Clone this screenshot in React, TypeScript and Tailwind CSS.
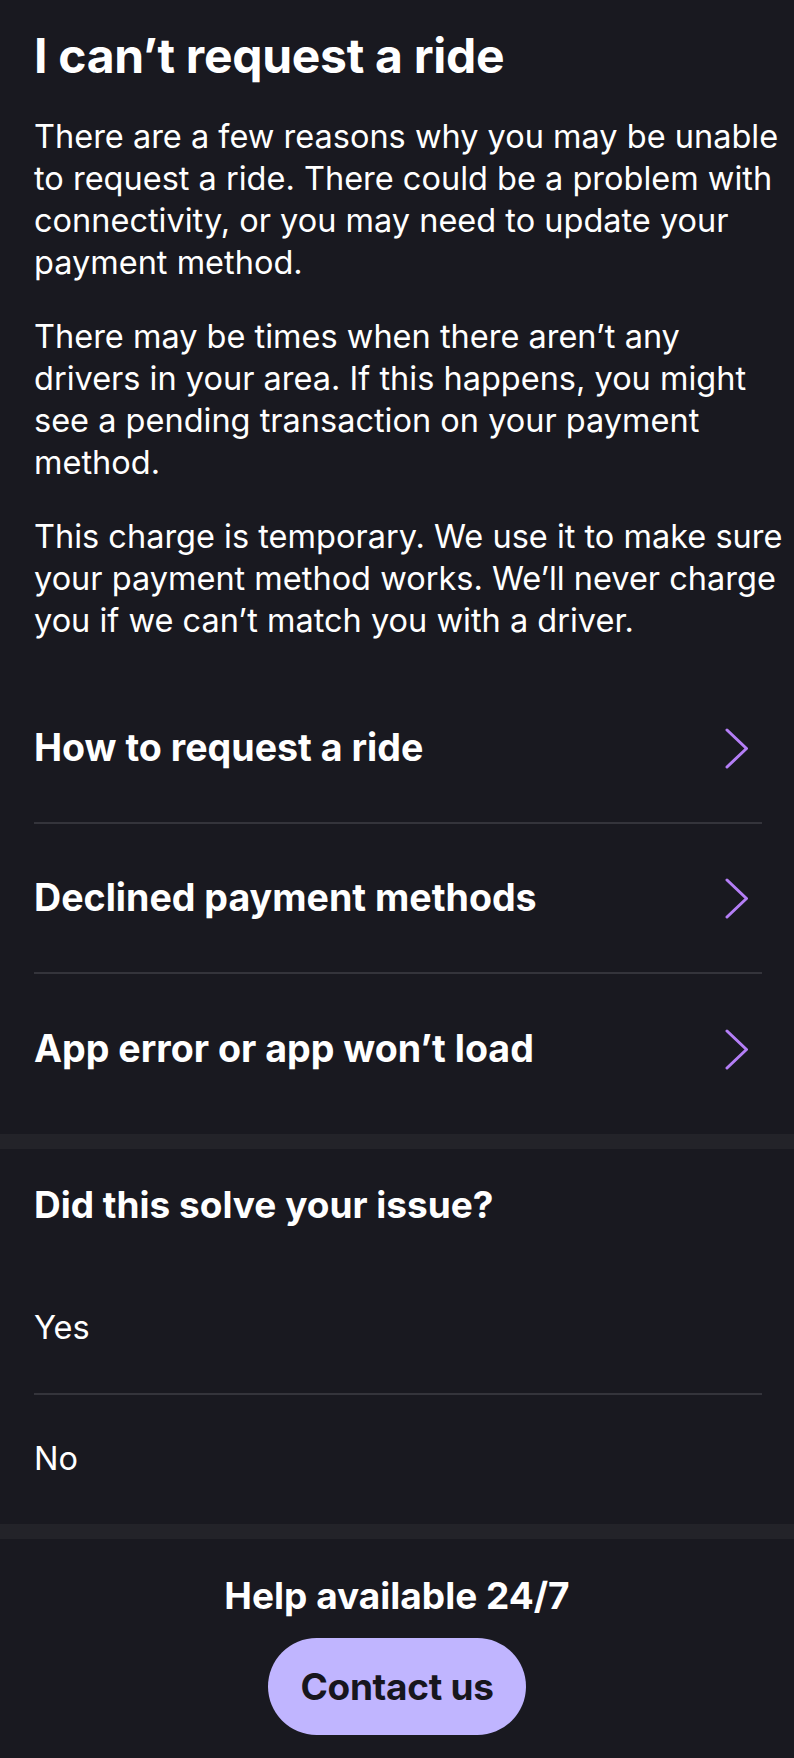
import React from 'react'

const paragraphs = [
  [
    'There are a few reasons why you may be unable',
    'to request a ride. There could be a problem with',
    'connectivity, or you may need to update your',
    'payment method.',
  ],
  [
    'There may be times when there aren’t any',
    'drivers in your area. If this happens, you might',
    'see a pending transaction on your payment',
    'method.',
  ],
  [
    'This charge is temporary. We use it to make sure',
    'your payment method works. We’ll never charge',
    'you if we can’t match you with a driver.',
  ],
]

const links = ['How to request a ride', 'Declined payment methods', 'App error or app won’t load']

const Chevron = () => (
  <svg width="24" height="41" viewBox="0 0 24 41" fill="none" className="shrink-0 mr-[13px]">
    <path d="M2 2 L21.5 20.5 L2 39" stroke="#b47ef6" strokeWidth="3" strokeLinecap="round" strokeLinejoin="round" />
  </svg>
)

export default function App() {
  return (
    <div className="min-h-screen bg-[#191920] text-white font-['Inter',sans-serif]">
      <div className="pl-[34px] pr-[32px] pt-[28px]">
        <h1 className="text-[48px] font-bold leading-[56px] tracking-[-0.3px]">I can’t request a ride</h1>

        <div className="mt-[32px] flex flex-col gap-[32px] -mr-[20px]">
          {paragraphs.map((lines, i) => (
            <p key={i} className="text-[32.5px] leading-[42px] whitespace-nowrap">
              {lines.map((line, j) => (
                <React.Fragment key={j}>
                  {line}
                  {j < lines.length - 1 && <br />}
                </React.Fragment>
              ))}
            </p>
          ))}
        </div>

        <div className="mt-[32px] flex flex-col">
          {links.map((label, i) => (
            <div
              key={label}
              className={`flex items-center justify-between h-[150px] ${
                i < links.length - 1 ? 'border-b-2 border-[#34343b]' : ''
              }`}
            >
              <span className="text-[37.6px] font-bold leading-none">{label}</span>
              <Chevron />
            </div>
          ))}
        </div>
      </div>

      <div className="mt-[10px] h-[15px] bg-[#232329]" />

      <div className="pl-[34px] pr-[32px] pt-[34px]">
        <h2 className="text-[37px] font-bold leading-[44px]">Did this solve your issue?</h2>
        <div className="mt-[36px] flex flex-col">
          <div className="h-[132px] flex items-center border-b-2 border-[#34343b] text-[32.5px]">Yes</div>
          <div className="h-[129px] flex items-center text-[32.5px]">No</div>
        </div>
      </div>

      <div className="h-[15px] bg-[#232329]" />

      <div className="pt-[35px] pb-[23px] flex flex-col items-center">
        <h3 className="text-[37px] font-bold leading-[44px]">Help available 24/7</h3>
        <button className="mt-[20px] w-[258px] h-[97px] rounded-full bg-[#c0b5ff] text-[#17161d] text-[37px] font-bold tracking-[-0.3px]">
          Contact us
        </button>
      </div>
    </div>
  )
}
